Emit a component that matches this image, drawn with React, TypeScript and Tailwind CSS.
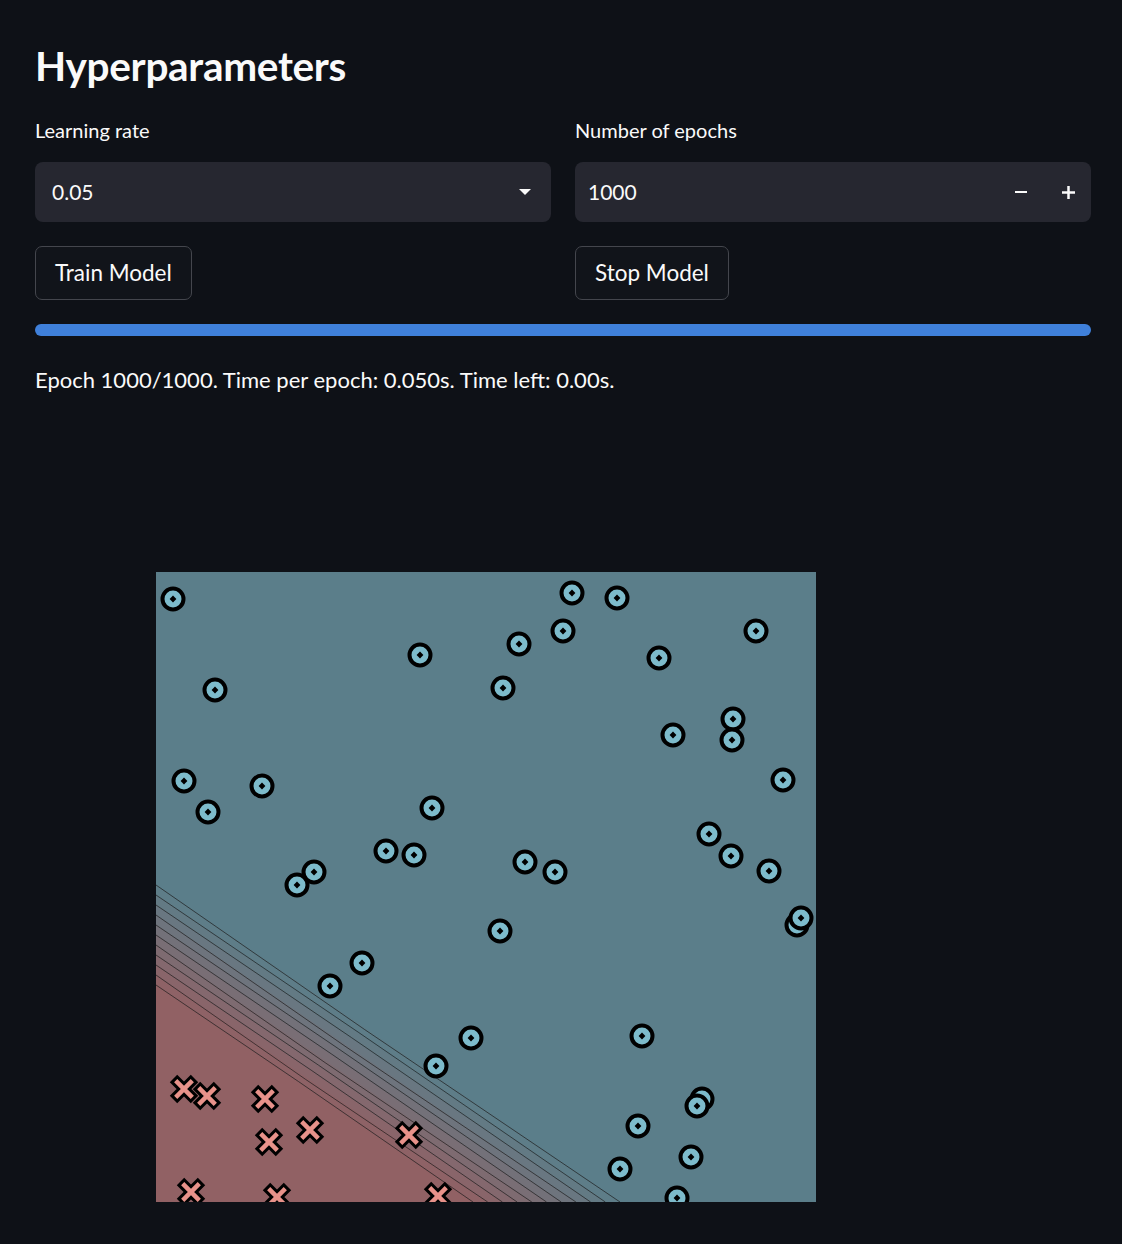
import React from "react";

const circles: [number, number][] = [
  [173, 599], [215, 690], [184, 781], [208, 812], [262, 786], [420, 655], [432, 808],
  [386, 851], [414, 855], [297, 885], [314, 872], [330, 986], [362, 963], [503, 688],
  [519, 644], [563, 631], [572, 593], [617, 598], [659, 658], [756, 631], [673, 735],
  [733, 719], [732, 740], [783, 780], [709, 834], [731, 856], [769, 871], [525, 862],
  [555, 872], [500, 931], [797, 925], [801, 918], [471, 1038], [436, 1066], [642, 1036],
  [702, 1099], [697, 1106], [638, 1126], [691, 1157], [620, 1169], [677, 1198],
];

const crosses: [number, number][] = [
  [184, 1089], [207, 1096], [265, 1099], [310, 1130], [269, 1142], [409, 1135],
  [191, 1192], [277, 1197], [438, 1196],
];

const OX = 156;
const OY = 572;
const W = 660;
const H = 630;

const teal = [91, 126, 138];
const red = [145, 97, 100];
const mix = (t: number) => {
  const c = teal.map((v, i) => Math.round(v + (red[i] - v) * t));
  return `rgb(${c[0]},${c[1]},${c[2]})`;
};

function Plot() {
  const lines = Array.from({ length: 11 }, (_, i) => {
    const y0 = 313 + i * 10;
    const x1 = 464 - i * 14.7;
    return { y0, x1 };
  });
  return (
    <svg width={W} height={H} viewBox={`0 0 ${W} ${H}`} className="block">
      <rect x={0} y={0} width={W} height={H} fill={mix(0)} />
      {lines.map((l, i) => (
        <polygon
          key={`b${i}`}
          points={`0,${l.y0} ${l.x1},${H} 0,${H}`}
          fill={i === 10 ? mix(1) : mix((i + 0.5) / 10)}
        />
      ))}
      {lines.map((l, i) => {
        const mx = l.x1 * 0.45;
        const my = l.y0 + (H - l.y0) * 0.45;
        return (
          <polyline
            key={`l${i}`}
            points={`0,${l.y0} ${mx},${my + (i % 3 === 0 ? 2 : -1)} ${l.x1},${H}`}
            fill="none"
            stroke="#1a1a1a"
            strokeOpacity={0.75}
            strokeWidth={0.9}
          />
        );
      })}
      {crosses.map(([x, y], i) => (
        <g key={`x${i}`} transform={`translate(${x - OX},${y - OY})`}>
          <path d="M-10.5,-10.5 L10.5,10.5 M-10.5,10.5 L10.5,-10.5" stroke="#000" strokeWidth={10.5} strokeLinecap="butt" />
          <path d="M-8.3,-8.3 L8.3,8.3 M-8.3,8.3 L8.3,-8.3" stroke="#e8928a" strokeWidth={4.5} strokeLinecap="butt" />
        </g>
      ))}
      {circles.map(([x, y], i) => (
        <g key={`c${i}`} transform={`translate(${x - OX},${y - OY})`}>
          <circle r={10.5} fill="#7dbbcb" stroke="#000" strokeWidth={4} />
          <rect x={-2.4} y={-2.4} width={4.8} height={4.8} fill="#000" transform="rotate(45)" />
        </g>
      ))}
    </svg>
  );
}

export default function App() {
  const font = { fontFamily: "Lato, 'Noto Sans', sans-serif" };
  return (
    <div className="min-h-[1244px] w-full bg-[#0e1117] text-[#fafafa]" style={font}>
      <div className="ml-[35px] w-[1056px] pt-[38px]">
        <div className="flex h-[56px] items-center text-[40.5px] font-bold tracking-[-0.3px]">Hyperparameters</div>
        <div className="mt-[24px] grid grid-cols-2 gap-[24px]">
          <div>
            <div className="flex h-[26px] items-center pb-[2px] text-[20px]">Learning rate</div>
            <div className="mt-[18px] flex h-[60px] items-center justify-between rounded-[8px] bg-[#262730] pl-[17px] pr-[20px] text-[21px]">
              <span>0.05</span>
              <svg width="12" height="7" viewBox="0 0 12 7">
                <path d="M0,0 L12,0 L6,6 Z" fill="#fafafa" />
              </svg>
            </div>
            <button className="mt-[24px] flex h-[54px] items-center rounded-[7px] border-[1.5px] border-[#44464d] bg-[#11141a] px-[19px] text-[22.5px]">
              Train Model
            </button>
          </div>
          <div>
            <div className="flex h-[26px] items-center pb-[2px] text-[20px]">Number of epochs</div>
            <div className="mt-[18px] flex h-[60px] items-center rounded-[8px] bg-[#262730] pl-[13px] text-[21px]">
              <span className="flex-1">1000</span>
              <div className="flex h-full w-[48px] items-center justify-center">
                <div className="h-[2.5px] w-[12px] bg-[#fafafa]" />
              </div>
              <div className="flex h-full w-[46px] items-center justify-center">
                <svg width="13" height="13" viewBox="0 0 13 13">
                  <rect x="0" y="5.25" width="13" height="2.5" fill="#fafafa" />
                  <rect x="5.25" y="0" width="2.5" height="13" fill="#fafafa" />
                </svg>
              </div>
            </div>
            <button className="mt-[24px] flex h-[54px] items-center rounded-[7px] border-[1.5px] border-[#44464d] bg-[#11141a] px-[19px] text-[22.5px]">
              Stop Model
            </button>
          </div>
        </div>
        <div className="mt-[24px] h-[12px] w-full rounded-full bg-[#3f80da]" />
        <div className="mt-[30px] flex h-[28px] items-center pb-[2px] text-[22px]">
          Epoch 1000/1000. Time per epoch: 0.050s. Time left: 0.00s.
        </div>
        <div className="ml-[121px] mt-[178px]">
          <Plot />
        </div>
      </div>
    </div>
  );
}
